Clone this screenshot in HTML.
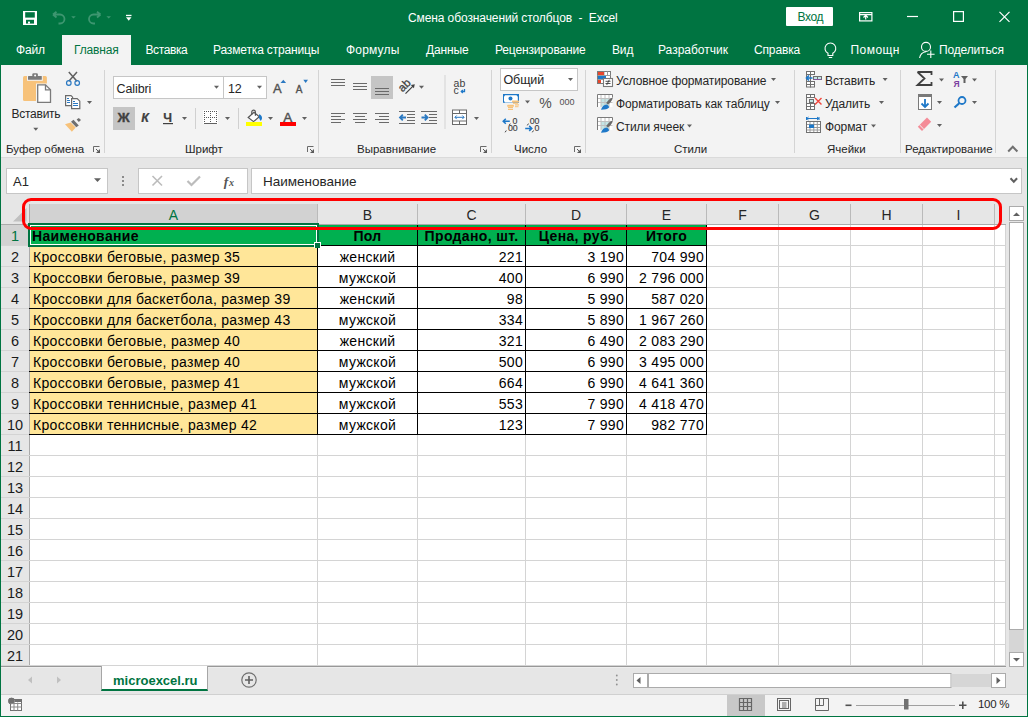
<!DOCTYPE html>
<html><head><meta charset="utf-8">
<style>
*{margin:0;padding:0;box-sizing:border-box}
html,body{width:1028px;height:717px;overflow:hidden}
body{position:relative;background:#007441;font-family:"Liberation Sans",sans-serif;color:#262626}
.a{position:absolute}
.t{position:absolute;white-space:nowrap;line-height:1}
/* title */
#title{left:0;top:0;width:1028px;height:35px;background:#007441}
.wt{color:#fff;font-size:12px;letter-spacing:-0.1px}
/* tabs */
.tab{position:absolute;top:43px;color:#fff;font-size:12px;white-space:nowrap;line-height:14px;letter-spacing:-0.15px}
#ribbon{left:1px;top:65px;width:1026px;height:93px;background:#f3f3f3;border-bottom:1px solid #dadada}
.sep{position:absolute;top:70px;width:1px;height:83px;background:#d4d4d4}
.gl{position:absolute;top:142px;font-size:11.5px;line-height:14px;white-space:nowrap;color:#262626}
.rl{position:absolute;font-size:12px;line-height:14px;white-space:nowrap;color:#262626;letter-spacing:-0.1px}
.launch{position:absolute;top:146px;width:7px;height:7px;border-left:1px solid #8a8a8a;border-top:1px solid #8a8a8a}
.launch:after{content:"";position:absolute;left:2px;top:2px;width:4px;height:4px;border-right:1px solid #555;border-bottom:1px solid #555}
#fbar{left:1px;top:158px;width:1026px;height:46px;background:#e6e6e6}
/* grid */
#gridbg{left:30px;top:225px;width:976px;height:441px;background:#fff;border-right:1px solid #ababab}
.ch{position:absolute;top:204px;height:20px;background:#e6e6e6;text-align:center;font-size:14px;line-height:22px;color:#262626}
.ch.sel{background:#d2d2d2;color:#007441}
.chl{position:absolute;top:204px;width:1px;height:20px;background:#bababa}
.rh{position:absolute;left:1px;width:28px;height:20px;background:#e6e6e6;text-align:center;font-size:14.5px;line-height:23px;color:#1a1a1a;border-bottom:1px solid #bdbdbd;height:21px}
.rh.sel{background:#d2d2d2;color:#007441}
.vl{position:absolute;top:225px;width:1px;height:441px;background:#d4d4d4}
.hl{position:absolute;left:1px;width:1005px;height:1px;background:#d4d4d4}
.fill{position:absolute}
.bk{position:absolute;background:#000}
.ct{position:absolute;height:20px;font-size:14px;line-height:22px;color:#000;white-space:nowrap;letter-spacing:0.3px}
.ct.b{font-weight:bold;letter-spacing:0.35px}
.ct.c{text-align:center}
.selb{position:absolute;border:2px solid #007441}
.selh{position:absolute;width:5px;height:5px;background:#007441;border:1px solid #fff}
</style></head><body>
<div id="title" class="a"></div>
<div class="t wt" style="left:408px;top:12px">Смена обозначений столбцов&nbsp; -&nbsp; Excel</div>
<!-- Вход -->
<div class="a" style="left:786px;top:7px;width:47px;height:19px;background:#fff;border-radius:1px"></div>
<div class="t" style="left:797.6px;top:11px;font-size:12px;color:#007441;letter-spacing:-0.45px">Вход</div>

<!-- tabs -->
<div class="a" style="left:62px;top:35px;width:69px;height:31px;background:#f3f3f3"></div>
<div class="tab" style="left:16px">Файл</div>
<div class="tab" style="left:74px;color:#007441">Главная</div>
<div class="tab" style="left:145.5px;letter-spacing:-0.4px">Вставка</div>
<div class="tab" style="left:213px">Разметка страницы</div>
<div class="tab" style="left:346px;letter-spacing:0.18px">Формулы</div>
<div class="tab" style="left:426px">Данные</div>
<div class="tab" style="left:495px">Рецензирование</div>
<div class="tab" style="left:612px">Вид</div>
<div class="tab" style="left:658px;letter-spacing:0px">Разработчик</div>
<div class="tab" style="left:754px">Справка</div>
<div class="tab" style="left:850.5px;letter-spacing:0.45px">Помощн</div>
<div class="tab" style="left:939px">Поделиться</div>

<div id="ribbon" class="a"></div>
<div class="sep" style="left:104px"></div>
<div class="sep" style="left:318px"></div>
<div class="sep" style="left:491px"></div>
<div class="sep" style="left:585px"></div>
<div class="sep" style="left:794px"></div>
<div class="sep" style="left:900px"></div>
<div class="sep" style="left:995px"></div>
<div class="gl" style="left:6px">Буфер обмена</div>
<div class="gl" style="left:185px">Шрифт</div>
<div class="gl" style="left:357px">Выравнивание</div>
<div class="gl" style="left:514px">Число</div>
<div class="gl" style="left:674px">Стили</div>
<div class="gl" style="left:827px">Ячейки</div>
<div class="gl" style="left:905px">Редактирование</div>
<svg class="a" style="left:0;top:0" width="1028" height="160"><path d="M93.5 152v-5.5h6" fill="none" stroke="#6a6a6a" stroke-width="1"/><path d="M96 153h4v-4z" fill="#5a5a5a"/><path d="M96 149l3.5 3.5" stroke="#5a5a5a" stroke-width="1"/><path d="M307.5 152v-5.5h6" fill="none" stroke="#6a6a6a" stroke-width="1"/><path d="M310 153h4v-4z" fill="#5a5a5a"/><path d="M310 149l3.5 3.5" stroke="#5a5a5a" stroke-width="1"/><path d="M480.5 152v-5.5h6" fill="none" stroke="#6a6a6a" stroke-width="1"/><path d="M483 153h4v-4z" fill="#5a5a5a"/><path d="M483 149l3.5 3.5" stroke="#5a5a5a" stroke-width="1"/><path d="M574.5 152v-5.5h6" fill="none" stroke="#6a6a6a" stroke-width="1"/><path d="M577 153h4v-4z" fill="#5a5a5a"/><path d="M577 149l3.5 3.5" stroke="#5a5a5a" stroke-width="1"/></svg>

<!-- ribbon text -->
<div class="rl" style="left:11.5px;top:107px;letter-spacing:-0.25px">Вставить</div>
<div class="a" style="left:113px;top:76px;width:111px;height:23px;background:#fff;border:1px solid #c6c6c6"></div>
<div class="a" style="left:223px;top:76px;width:44px;height:23px;background:#fff;border:1px solid #c6c6c6"></div>
<div class="rl" style="left:116.5px;top:82px;font-size:12.5px;color:#262626">Calibri</div>
<div class="rl" style="left:228px;top:82px;font-size:12.5px;color:#262626">12</div>
<div class="a" style="left:113px;top:107px;width:22px;height:23px;background:#c5c5c5"></div>
<div class="a" style="left:371px;top:76px;width:22px;height:23px;background:#c5c5c5"></div>
<div class="a" style="left:500px;top:68px;width:78px;height:23px;background:#fff;border:1px solid #c6c6c6"></div>
<div class="rl" style="left:503.5px;top:73px;font-size:12.5px;color:#262626">Общий</div>
<div class="rl" style="left:616px;top:74px">Условное форматирование</div>
<div class="rl" style="left:616px;top:97px">Форматировать как таблицу</div>
<div class="rl" style="left:616px;top:120px">Стили ячеек</div>
<div class="rl" style="left:825px;top:74px">Вставить</div>
<div class="rl" style="left:825px;top:97px">Удалить</div>
<div class="rl" style="left:825px;top:120px">Формат</div>
<svg class="a" style="left:0;top:0" width="1028" height="160" viewBox="0 0 1028 160">
<defs>
<path id="dd" d="M0 0h5l-2.5 3z" fill="#606060"/>
</defs>
<!-- title bar icons -->
<rect x="23" y="11" width="14" height="14" fill="#fff"/>
<rect x="25.2" y="12.2" width="9.6" height="5.4" fill="#007441"/>
<rect x="26" y="19.8" width="8" height="3.8" fill="#007441"/>
<rect x="28" y="21.6" width="2" height="2" fill="#fff"/>
<g fill="none" stroke="#3d9670" stroke-width="1.8">
 <path d="M53 14.5l3.5-2.8M53 14.5l3.5 3M53.5 14.5h6.5a4.5 4.5 0 0 1 0 9h-1.5"/>
 <path d="M100.5 14.5l-3.5-2.8M100.5 14.5l-3.5 3M100 14.5h-6.5a4.5 4.5 0 0 0 0 9h1.5"/>
</g>
<path d="M71.2 16.2h4.6l-2.3 2.3z M106.4 16.2h4.6l-2.3 2.3z" fill="#3d9670"/>
<rect x="126" y="14.8" width="5.5" height="1.3" fill="#fff"/><path d="M126 17.3h5.5l-2.75 3.5z" fill="#fff"/>
<!-- ribbon display options -->
<g fill="none" stroke="#fff" stroke-width="1.2">
 <rect x="859.6" y="12.6" width="12.3" height="8.3"/>
 <path d="M859.6 14.6h12.3 M865.7 19.5v-4 M863.5 17.5l2.2-2.2 2.2 2.2"/>
 <path d="M907 16.5h11"/>
 <rect x="953.6" y="11.6" width="9.8" height="9.8"/>
 <path d="M999.5 11.8l10 10 M1009.5 11.8l-10 10"/>
</g>
<!-- bulb -->
<g fill="none" stroke="#fff" stroke-width="1.1">
 <path d="M828 53.2a5.4 5.4 0 1 1 4.8 0v2.3h-4.8z M828.8 57.5h3.4"/>
 <circle cx="926" cy="46.9" r="4.5"/>
 <path d="M919.6 58c0.6-3.5 2.8-5.8 6.4-6.2"/>
 <path d="M930.8 50.5v7.6 M927 54.3h7.6"/>
</g>
<!-- Clipboard -->
<rect x="23" y="76" width="23.9" height="24.9" rx="1.5" fill="#f7c27a"/>
<rect x="27" y="76" width="15.8" height="4.8" fill="#f3f3f3"/>
<rect x="28" y="76" width="13.8" height="3.8" rx=".5" fill="#7a7a7a"/>
<rect x="32.3" y="73.3" width="5.6" height="3.5" rx="1.2" fill="#7a7a7a"/>
<circle cx="35.1" cy="75.6" r="1" fill="#fff"/>
<rect x="36" y="83.5" width="15.5" height="20" fill="#f3f3f3"/>
<path d="M37.7 84.8h7.8l5 5v12.5h-12.8z" fill="#fff" stroke="#7a7a7a" stroke-width="1.3"/>
<path d="M45.5 84.8v5h5" fill="none" stroke="#7a7a7a" stroke-width="1.3"/>
<use href="#dd" x="33.3" y="127.8"/>
<!-- scissors -->
<path d="M68.8 72l8.2 9.3 M77 72l-8.2 9.3" stroke="#606060" stroke-width="1.5"/>
<circle cx="68.8" cy="83" r="2.3" fill="none" stroke="#2b79c2" stroke-width="1.2"/>
<circle cx="77.2" cy="83" r="2.3" fill="none" stroke="#2b79c2" stroke-width="1.2"/>
<!-- copy -->
<path d="M65.6 95.6h5.4l1.6 1.6v8.4h-7z" fill="#fff" stroke="#6a6a6a" stroke-width="1.2"/>
<path d="M71.6 98.6h5.6l2.6 2.6v7.4h-8.2z" fill="#fff" stroke="#6a6a6a" stroke-width="1.2"/>
<path d="M67 98.5h2 M67 100.5h3 M67 102.5h3 M73 101.5h2 M73 103.5h5 M73 105.5h5" stroke="#2b79c2" stroke-width="1"/>
<use href="#dd" x="87" y="101"/>
<!-- brush -->
<path d="M65 124.2l5.7-1.6 5 5-3.8 4.1z" fill="#f7c27a"/>
<path d="M71 121.7l2.5-1.9 5.3 5.6-2.5 1.9z" fill="#707070"/>
<path d="M76.6 119.5l2.2-1.6 2.2 2.2-2.2 1.9z" fill="#707070"/>
<!-- font dropdown arrows -->
<use href="#dd" x="214" y="85.8"/>
<use href="#dd" x="257" y="85.8"/>
<!-- grow/shrink A -->
<text x="273" y="92.7" font-family="Liberation Sans" font-size="13" fill="#505050" stroke="#505050" stroke-width="0.35">A</text>
<path d="M280.5 83h5.6l-2.8-3.3z" fill="#2b79c2"/>
<text x="295.8" y="92.7" font-family="Liberation Sans" font-size="10" fill="#505050" stroke="#505050" stroke-width="0.35">A</text>
<path d="M303.3 79.7h4.7l-2.35 3.3z" fill="#2b79c2"/>
<!-- B I U -->
<text x="117.6" y="121.9" font-family="Liberation Sans" font-weight="bold" font-size="12.5" fill="#404040" stroke="#404040" stroke-width="0.3" transform="translate(117.6 0) scale(1.08 1) translate(-117.6 0)">Ж</text>
<text x="141.3" y="121.9" font-family="Liberation Sans" font-weight="bold" font-style="italic" font-size="12.5" fill="#404040" stroke="#404040" stroke-width="0.2">К</text>
<text x="163.3" y="121.9" font-family="Liberation Sans" font-weight="bold" font-size="12.5" fill="#404040" stroke="#404040" stroke-width="0.2">Ч</text>
<rect x="163" y="123" width="10" height="1.2" fill="#404040"/>
<use href="#dd" x="182" y="117"/>
<rect x="195" y="108" width="1" height="21" fill="#d0d0d0"/>
<!-- borders -->
<rect x="203" y="110" width="15" height="14" fill="#fff"/>
<g fill="#555"><rect x="204" y="111" width="1" height="1"/><rect x="206" y="111" width="1" height="1"/><rect x="208" y="111" width="1" height="1"/><rect x="210" y="111" width="1" height="1"/><rect x="212" y="111" width="1" height="1"/><rect x="214" y="111" width="1" height="1"/><rect x="216" y="111" width="1" height="1"/><rect x="204" y="113" width="1" height="1"/><rect x="210" y="113" width="1" height="1"/><rect x="216" y="113" width="1" height="1"/><rect x="204" y="115" width="1" height="1"/><rect x="210" y="115" width="1" height="1"/><rect x="216" y="115" width="1" height="1"/><rect x="204" y="117" width="1" height="1"/><rect x="206" y="117" width="1" height="1"/><rect x="208" y="117" width="1" height="1"/><rect x="210" y="117" width="1" height="1"/><rect x="212" y="117" width="1" height="1"/><rect x="214" y="117" width="1" height="1"/><rect x="216" y="117" width="1" height="1"/><rect x="204" y="119" width="1" height="1"/><rect x="210" y="119" width="1" height="1"/><rect x="216" y="119" width="1" height="1"/><rect x="204" y="121" width="1" height="1"/><rect x="210" y="121" width="1" height="1"/><rect x="216" y="121" width="1" height="1"/></g>
<rect x="204" y="123" width="13" height="1" fill="#606060"/>
<use href="#dd" x="225" y="117"/>
<rect x="238" y="108" width="1" height="21" fill="#d0d0d0"/>
<!-- fill bucket -->
<path d="M248.2 117.5L254 112.2 259.3 116.8 253.5 121.6z" fill="#fff" stroke="#555" stroke-width="1.2"/>
<path d="M251.8 114.5v-2.6a1.8 1.8 0 0 1 3.6 0v3.8" fill="none" stroke="#555" stroke-width="1.2"/>
<path d="M259 114.3c2 .3 3 2.3 3 3.8 0 1.5-.8 2.3-1.3 3-.6-1.5-1.7-2.2-1.7-3.8z" fill="#1e78c8"/>
<rect x="246" y="122" width="16" height="4" fill="#ffff00"/>
<use href="#dd" x="268" y="117"/>
<!-- font color -->
<text x="283.3" y="121.8" font-family="Liberation Sans" font-size="13.5" fill="#505050" stroke="#505050" stroke-width="0.4">A</text>
<rect x="280" y="122" width="16" height="4" fill="#ff0000"/>
<use href="#dd" x="302" y="117"/>

<!-- alignment -->
<g stroke="#6a6a6a" stroke-width="1.1">
<path d="M331 79.5h14 M331 82.5h14 M331 85.5h14"/>
<path d="M353 83.5h14 M353 86.5h14 M353 89.5h14"/>
<path d="M375 88.5h14 M375 91.5h14 M375 94.5h14"/>
<path d="M331 113.5h14 M331 116.5h10 M331 119.5h14 M331 122.5h10"/>
<path d="M353 113.5h14 M355 116.5h10 M353 119.5h14 M355 122.5h10"/>
<path d="M375 113.5h14 M379 116.5h10 M375 119.5h14 M379 122.5h10"/>
<path d="M399 111.5h16 M407 114.5h8 M407 117.5h8 M407 120.5h8 M399 123.5h16"/>
<path d="M421 111.5h16 M429 114.5h8 M429 117.5h8 M429 120.5h8 M421 123.5h16"/>
</g>
<path d="M400 117.5h6 M402.8 114.7l-2.8 2.8 2.8 2.8" stroke="#2b79c2" stroke-width="1.8" fill="none"/>
<path d="M421.5 117.5h6 M424.8 114.7l2.8 2.8-2.8 2.8" stroke="#2b79c2" stroke-width="1.8" fill="none"/>
<text x="0" y="0" font-family="Liberation Sans" font-size="11.5" fill="#404040" stroke="#404040" stroke-width="0.3" transform="translate(402.6 92.6) rotate(-45)">ab</text>
<path d="M405.5 93.6l7.5-7.5" stroke="#404040" stroke-width="1.3" fill="none"/><path d="M414.8 84.2l-4 .9 3.1 3.1z" fill="#404040"/>
<use href="#dd" x="419" y="85.8"/>
<rect x="444.5" y="75" width="1" height="54" fill="#d4d4d4"/>
<!-- wrap -->
<text x="453.6" y="86.7" font-family="Liberation Sans" font-size="10.5" fill="#404040">ab</text>
<text x="453.6" y="93.8" font-family="Liberation Sans" font-size="10.5" fill="#404040">c</text>
<path d="M464.5 89v2.5h-3 M462.8 90l-1.5 1.5 1.5 1.5" stroke="#1e78c8" stroke-width="1.3" fill="none"/>
<!-- merge -->
<rect x="452.5" y="110" width="14" height="14.5" fill="#fff" stroke="#6a6a6a" stroke-width="1"/>
<path d="M452.5 113.5h14 M452.5 121h14 M459.5 110v3.5 M459.5 121v3.5" stroke="#6a6a6a" stroke-width="1"/>
<path d="M455 117.3h9 M456.7 115.5l-1.8 1.8 1.8 1.8 M462.3 115.5l1.8 1.8-1.8 1.8" stroke="#2b79c2" stroke-width="1" fill="none"/>
<use href="#dd" x="474" y="117"/>

<!-- number -->
<use href="#dd" x="568" y="78"/>
<rect x="503" y="94" width="16" height="8.8" fill="#1e78c8"/>
<path d="M505 95.3h11.5l1.3 1.5v4.4h-5v1.2h-7.8l-1-1.4v-4.2z" fill="#fff"/>
<circle cx="510.5" cy="98.4" r="2" fill="#1e78c8"/>
<rect x="512" y="100.5" width="7" height="2" rx=".6" fill="#f7c27a"/>
<rect x="513" y="102.6" width="5" height="1.2" fill="#f7c27a"/>
<rect x="515" y="104.3" width="4" height="1.2" fill="#f7c27a"/>
<rect x="515" y="106.2" width="3.5" height="1" fill="#f7c27a"/>
<rect x="507.2" y="104.8" width="6.7" height="2" rx=".6" fill="#f7c27a"/>
<rect x="508" y="106.9" width="5" height="1.2" fill="#f7c27a"/>
<rect x="508" y="108.8" width="5" height="1.2" fill="#f7c27a"/>
<use href="#dd" x="525" y="100.5"/>
<text x="539.3" y="107.7" font-family="Liberation Sans" font-size="14" fill="#505050">%</text>
<text x="559.5" y="104.7" font-family="Liberation Sans" font-size="9" fill="#505050">000</text>
<g font-family="Liberation Sans" font-size="8.8" fill="#404040" stroke="#404040" stroke-width="0.15">
<text x="512.6" y="123.9">0</text>
<text x="507.9" y="130.9">00</text>
<text x="529.7" y="123.9">00</text>
<text x="534.6" y="130.9">0</text>
</g>
<path d="M506.3 130.5l-1.2 1.8 M510.3 123.6l-1.2 1.8 M528.5 123.6l-1.2 1.8 M533.5 130.5l-1.2 1.8" stroke="#404040" stroke-width="1"/>
<path d="M503 121.3h6.8 M505.8 118.8l-2.6 2.5 2.6 2.5" stroke="#1e78c8" stroke-width="1.5" fill="none"/>
<path d="M525.2 128.4h6.6 M529.2 125.9l2.6 2.5-2.6 2.5" stroke="#1e78c8" stroke-width="1.5" fill="none"/>

<!-- styles icons -->
<g>
<rect x="597.5" y="71.5" width="13" height="12" fill="#fff" stroke="#7a7a7a" stroke-width="1"/>
<path d="M597.5 75.5h13 M597.5 79.5h6 M604 71.5v4 M607.5 71.5v4" stroke="#9a9a9a" stroke-width="1"/>
<rect x="598" y="72" width="6" height="3" fill="#e8462b"/>
<rect x="598" y="76" width="8" height="3" fill="#1e78c8"/>
<rect x="598" y="80" width="3" height="3" fill="#e8462b"/>
<rect x="603.5" y="78.5" width="9" height="8" fill="#fff" stroke="#7a7a7a" stroke-width="1.1"/>
<path d="M605.5 81.3h5 M605.5 83.5h5 M609.3 79.8l-2.6 5.2" stroke="#404040" stroke-width=".9"/>
</g>
<g id="ftab">
<rect x="597.5" y="94.5" width="15" height="12.5" fill="#fff"/>
<rect x="601" y="98.5" width="8" height="8" fill="#c3e4e4"/>
<path d="M597.5 98.5h15 M597.5 102.5h15 M601 94.5v12.5 M605 94.5v12.5 M609 94.5v12.5" stroke="#c0c0c0" stroke-width="1"/>
<path d="M597.5 107v-12.5h15" fill="none" stroke="#7a7a7a" stroke-width="1"/>
<path d="M612.5 94.5v3" fill="none" stroke="#7a7a7a" stroke-width="1"/>
<path d="M612.8 97.5c-.5 3-2.5 5.5-5 7l-1.6-1.6c1.6-2.4 4-4.6 6.6-5.4z" fill="#6a6a6a"/>
<path d="M601 109.7c.8-2.8 2.8-5 6-5.2 1 .8 1.8 1.7 2.3 2.7-1.5 1.8-4.5 2.5-8.3 2.5z" fill="#1e78c8"/>
</g>
<use href="#ftab" y="23"/>
<use href="#dd" x="771" y="78"/>
<use href="#dd" x="775" y="101"/>
<use href="#dd" x="687" y="124.5"/>

<!-- cells icons -->
<g stroke="#707070" stroke-width="1" fill="#fff">
<rect x="806.5" y="71.5" width="4" height="3"/><rect x="810.5" y="71.5" width="4" height="3"/>
<rect x="806.5" y="81.5" width="4" height="3"/><rect x="810.5" y="81.5" width="4" height="3"/>
<rect x="806.5" y="84.5" width="4" height="2.5"/><rect x="810.5" y="84.5" width="4" height="2.5"/>
<rect x="806.5" y="74.5" width="4" height="7" fill="none"/>
<rect x="813.5" y="76.5" width="4" height="3" fill="#c3e4e4"/><rect x="817.5" y="76.5" width="4" height="3" fill="#c3e4e4"/>
</g>
<path d="M813.5 79.5h8" stroke="#8a4fa8" stroke-width=".8"/>
<path d="M806.5 78h6 M809 75.5l-2.5 2.5 2.5 2.5" stroke="#1e78c8" stroke-width="1.6" fill="none"/>
<use href="#dd" x="882.6" y="78"/>
<g stroke="#707070" stroke-width="1" fill="#fff">
<rect x="806.5" y="94.5" width="4" height="3"/><rect x="810.5" y="94.5" width="4" height="3"/>
<rect x="806.5" y="103.5" width="4" height="3"/><rect x="810.5" y="103.5" width="4" height="3"/>
<rect x="806.5" y="106.5" width="4" height="3"/><rect x="810.5" y="106.5" width="4" height="3"/>
<path d="M806.5 97.5v6" fill="none"/>
<rect x="809.5" y="99.5" width="4" height="3" fill="#c3e4e4"/>
</g>
<path d="M815 98l6.5 6.5 M821.5 98l-6.5 6.5" stroke="#f0463c" stroke-width="1.4"/>
<use href="#dd" x="879" y="101"/>
<g>
<rect x="806.5" y="121.5" width="14" height="11" fill="#fff" stroke="#707070" stroke-width="1"/>
<path d="M806.5 124.5h14 M806.5 127.5h14 M806.5 130h14 M810 121.5v11 M813.8 121.5v11 M817.3 121.5v11" stroke="#9a9a9a" stroke-width="1"/>
<rect x="806.5" y="121.5" width="14" height="11" fill="none" stroke="#707070" stroke-width="1"/>
<rect x="809" y="124.5" width="5" height="3.5" fill="#1e78c8"/>
<path d="M806.5 118.5h12.5 M806.5 117v3 M819 117v3 M808.5 117l-1.8 1.5 1.8 1.5 M817 117l1.8 1.5-1.8 1.5" stroke="#1e78c8" stroke-width="1" fill="none"/>
</g>
<use href="#dd" x="871" y="124.5"/>

<!-- editing -->
<path d="M917.5 72h14v3 M931.5 85h-14l7-6.5-7-6.5 M917.5 85h14v-3" fill="none" stroke="#404040" stroke-width="1.8"/>
<use href="#dd" x="939" y="78.6"/>
<text x="953" y="77.8" font-family="Liberation Sans" font-size="9" font-weight="bold" fill="#1e78c8">A</text>
<text x="953.5" y="87" font-family="Liberation Sans" font-size="8.5" font-weight="bold" fill="#7b3fa0">Я</text>
<path d="M961 76h7l-2.5 3v4h-2v-4z" fill="#606060"/>
<use href="#dd" x="972" y="78.6"/>
<rect x="918.5" y="94.5" width="13" height="15" fill="#fff" stroke="#7a7a7a" stroke-width="1"/>
<rect x="918.5" y="94.5" width="13" height="2.5" fill="#7a7a7a"/>
<path d="M925 99v8 M921.5 103.5l3.5 3.5 3.5-3.5" stroke="#1e78c8" stroke-width="1.8" fill="none"/>
<use href="#dd" x="937" y="101"/>
<circle cx="962" cy="100.5" r="3.5" fill="none" stroke="#1e78c8" stroke-width="1.8"/>
<path d="M959.5 103l-5 4.5" stroke="#1e78c8" stroke-width="2.2"/>
<use href="#dd" x="972" y="101"/>
<path d="M931.2 121.8L927 117.6 917.8 126.8 922 131z" fill="#f48b97"/>
<path d="M919.4 124.8l4.4 4.4" stroke="#f3f3f3" stroke-width="1"/>
<use href="#dd" x="937" y="124"/>
<path d="M1008.2 151.5l4.6-4.8 4.6 4.8" fill="none" stroke="#707070" stroke-width="2"/>
</svg>


<div id="fbar" class="a"></div>
<div class="a" style="left:6px;top:168px;width:102px;height:26px;background:#fff;border:1px solid #c6c6c6"></div>
<div class="t" style="left:13px;top:175px;font-size:13px;color:#262626">A1</div>
<div class="a" style="left:138px;top:168px;width:110px;height:26px;background:#fff;border:1px solid #c6c6c6"></div>
<div class="a" style="left:251px;top:168px;width:771px;height:26px;background:#fff;border:1px solid #c6c6c6"></div>
<div class="t" style="left:263px;top:175px;font-size:13.5px;color:#262626">Наименование</div>

<div class="a" style="left:1px;top:204px;width:1026px;height:462px;background:#e6e6e6"></div>
<div id="gridbg" class="a"></div>
<div class="a" style="left:1px;top:204px;width:28px;height:20px;background:#e6e6e6"></div>
<div class="a" style="left:994px;top:204px;width:11px;height:20px;background:#e6e6e6"></div>
<div class="ch sel" style="left:30px;width:287px">A</div>
<div class="chl" style="left:317px"></div>
<div class="ch" style="left:318px;width:99px">B</div>
<div class="chl" style="left:417px"></div>
<div class="ch" style="left:418px;width:107px">C</div>
<div class="chl" style="left:525px"></div>
<div class="ch" style="left:526px;width:100px">D</div>
<div class="chl" style="left:626px"></div>
<div class="ch" style="left:627px;width:79px">E</div>
<div class="chl" style="left:706px"></div>
<div class="ch" style="left:707px;width:71px">F</div>
<div class="chl" style="left:778px"></div>
<div class="ch" style="left:779px;width:71px">G</div>
<div class="chl" style="left:850px"></div>
<div class="ch" style="left:851px;width:71px">H</div>
<div class="chl" style="left:922px"></div>
<div class="ch" style="left:923px;width:71px">I</div>
<div class="chl" style="left:994px"></div>
<div class="rh sel" style="top:225px">1</div>
<div class="rh" style="top:246px">2</div>
<div class="rh" style="top:267px">3</div>
<div class="rh" style="top:288px">4</div>
<div class="rh" style="top:309px">5</div>
<div class="rh" style="top:330px">6</div>
<div class="rh" style="top:351px">7</div>
<div class="rh" style="top:372px">8</div>
<div class="rh" style="top:393px">9</div>
<div class="rh" style="top:414px">10</div>
<div class="rh" style="top:435px">11</div>
<div class="rh" style="top:456px">12</div>
<div class="rh" style="top:477px">13</div>
<div class="rh" style="top:498px">14</div>
<div class="rh" style="top:519px">15</div>
<div class="rh" style="top:540px">16</div>
<div class="rh" style="top:561px">17</div>
<div class="rh" style="top:582px">18</div>
<div class="rh" style="top:603px">19</div>
<div class="rh" style="top:624px">20</div>
<div class="rh" style="top:645px">21</div>
<div class="a" style="left:29px;top:204px;width:1px;height:462px;background:#ababab"></div>
<div class="a" style="left:1px;top:224px;width:1005px;height:1px;background:#ababab"></div>
<div class="fill" style="left:30px;top:225px;width:676px;height:20px;background:#00b050"></div>
<div class="fill" style="left:30px;top:246px;width:287px;height:188px;background:#ffe699"></div>
<div class="vl" style="left:317px"></div>
<div class="vl" style="left:417px"></div>
<div class="vl" style="left:525px"></div>
<div class="vl" style="left:626px"></div>
<div class="vl" style="left:706px"></div>
<div class="vl" style="left:778px"></div>
<div class="vl" style="left:850px"></div>
<div class="vl" style="left:922px"></div>
<div class="vl" style="left:994px"></div>
<div class="vl" style="left:1005px"></div>
<div class="hl" style="top:245px"></div>
<div class="hl" style="top:266px"></div>
<div class="hl" style="top:287px"></div>
<div class="hl" style="top:308px"></div>
<div class="hl" style="top:329px"></div>
<div class="hl" style="top:350px"></div>
<div class="hl" style="top:371px"></div>
<div class="hl" style="top:392px"></div>
<div class="hl" style="top:413px"></div>
<div class="hl" style="top:434px"></div>
<div class="hl" style="top:455px"></div>
<div class="hl" style="top:476px"></div>
<div class="hl" style="top:497px"></div>
<div class="hl" style="top:518px"></div>
<div class="hl" style="top:539px"></div>
<div class="hl" style="top:560px"></div>
<div class="hl" style="top:581px"></div>
<div class="hl" style="top:602px"></div>
<div class="hl" style="top:623px"></div>
<div class="hl" style="top:644px"></div>
<div class="hl" style="top:665px"></div>
<div class="bk" style="left:317px;top:225px;width:1px;height:210px"></div>
<div class="bk" style="left:417px;top:225px;width:1px;height:210px"></div>
<div class="bk" style="left:525px;top:225px;width:1px;height:210px"></div>
<div class="bk" style="left:626px;top:225px;width:1px;height:210px"></div>
<div class="bk" style="left:706px;top:225px;width:1px;height:210px"></div>
<div class="bk" style="left:29px;top:245px;width:678px;height:1px"></div>
<div class="bk" style="left:29px;top:266px;width:678px;height:1px"></div>
<div class="bk" style="left:29px;top:287px;width:678px;height:1px"></div>
<div class="bk" style="left:29px;top:308px;width:678px;height:1px"></div>
<div class="bk" style="left:29px;top:329px;width:678px;height:1px"></div>
<div class="bk" style="left:29px;top:350px;width:678px;height:1px"></div>
<div class="bk" style="left:29px;top:371px;width:678px;height:1px"></div>
<div class="bk" style="left:29px;top:392px;width:678px;height:1px"></div>
<div class="bk" style="left:29px;top:413px;width:678px;height:1px"></div>
<div class="bk" style="left:29px;top:434px;width:678px;height:1px"></div>
<div class="ct b" style="left:32px;top:225px">Наименование</div>
<div class="ct b c" style="left:318px;width:99px;top:225px">Пол</div>
<div class="ct b c" style="left:418px;width:107px;top:225px">Продано, шт.</div>
<div class="ct b c" style="left:526px;width:100px;top:225px">Цена, руб.</div>
<div class="ct b c" style="left:627px;width:79px;top:225px">Итого</div>
<div class="ct" style="left:33px;top:246px">Кроссовки беговые, размер 35</div>
<div class="ct c" style="left:318px;width:99px;top:246px">женский</div>
<div class="ct r" style="right:505px;top:246px">221</div>
<div class="ct r" style="right:404px;top:246px">3 190</div>
<div class="ct r" style="right:324px;top:246px">704 990</div>
<div class="ct" style="left:33px;top:267px">Кроссовки беговые, размер 39</div>
<div class="ct c" style="left:318px;width:99px;top:267px">мужской</div>
<div class="ct r" style="right:505px;top:267px">400</div>
<div class="ct r" style="right:404px;top:267px">6 990</div>
<div class="ct r" style="right:324px;top:267px">2 796 000</div>
<div class="ct" style="left:33px;top:288px">Кроссовки для баскетбола, размер 39</div>
<div class="ct c" style="left:318px;width:99px;top:288px">женский</div>
<div class="ct r" style="right:505px;top:288px">98</div>
<div class="ct r" style="right:404px;top:288px">5 990</div>
<div class="ct r" style="right:324px;top:288px">587 020</div>
<div class="ct" style="left:33px;top:309px">Кроссовки для баскетбола, размер 43</div>
<div class="ct c" style="left:318px;width:99px;top:309px">мужской</div>
<div class="ct r" style="right:505px;top:309px">334</div>
<div class="ct r" style="right:404px;top:309px">5 890</div>
<div class="ct r" style="right:324px;top:309px">1 967 260</div>
<div class="ct" style="left:33px;top:330px">Кроссовки беговые, размер 40</div>
<div class="ct c" style="left:318px;width:99px;top:330px">женский</div>
<div class="ct r" style="right:505px;top:330px">321</div>
<div class="ct r" style="right:404px;top:330px">6 490</div>
<div class="ct r" style="right:324px;top:330px">2 083 290</div>
<div class="ct" style="left:33px;top:351px">Кроссовки беговые, размер 40</div>
<div class="ct c" style="left:318px;width:99px;top:351px">мужской</div>
<div class="ct r" style="right:505px;top:351px">500</div>
<div class="ct r" style="right:404px;top:351px">6 990</div>
<div class="ct r" style="right:324px;top:351px">3 495 000</div>
<div class="ct" style="left:33px;top:372px">Кроссовки беговые, размер 41</div>
<div class="ct c" style="left:318px;width:99px;top:372px">мужской</div>
<div class="ct r" style="right:505px;top:372px">664</div>
<div class="ct r" style="right:404px;top:372px">6 990</div>
<div class="ct r" style="right:324px;top:372px">4 641 360</div>
<div class="ct" style="left:33px;top:393px">Кроссовки теннисные, размер 41</div>
<div class="ct c" style="left:318px;width:99px;top:393px">мужской</div>
<div class="ct r" style="right:505px;top:393px">553</div>
<div class="ct r" style="right:404px;top:393px">7 990</div>
<div class="ct r" style="right:324px;top:393px">4 418 470</div>
<div class="ct" style="left:33px;top:414px">Кроссовки теннисные, размер 42</div>
<div class="ct c" style="left:318px;width:99px;top:414px">мужской</div>
<div class="ct r" style="right:505px;top:414px">123</div>
<div class="ct r" style="right:404px;top:414px">7 990</div>
<div class="ct r" style="right:324px;top:414px">982 770</div>
<div class="a" style="left:28px;top:223px;width:291px;height:24px;border:2px solid #007441"></div>
<div class="a" style="left:30px;top:225px;width:287px;height:20px;border:1px solid #fff"></div>
<div class="a" style="left:314px;top:242px;width:7px;height:6px;background:#fff"></div>
<div class="a" style="left:315px;top:243px;width:5px;height:5px;background:#007441"></div>



<!-- sheet bar -->
<div class="a" style="left:1px;top:666px;width:1026px;height:28px;background:#e6e6e6"></div><div class="a" style="left:1px;top:666px;width:1005px;height:1px;background:#989898"></div><div class="a" style="left:1px;top:667px;width:1005px;height:1px;background:#eeeeee"></div>
<div class="a" style="left:101px;top:666px;width:107px;height:25px;background:#fff;border:1px solid #a6a6a6;border-top:none;border-bottom:2px solid #007441"></div>
<div class="t" style="left:113px;top:674px;font-size:13px;font-weight:bold;color:#007441">microexcel.ru</div>

<!-- status bar -->
<div class="a" style="left:1px;top:694px;width:1026px;height:22px;background:#f3f3f3;border-top:1px solid #d0d0d0"></div>
<div class="a" style="left:727px;top:695px;width:38px;height:21px;background:#c8c8c8"></div>
<svg class="a" style="left:0;top:0" width="1028" height="717" viewBox="0 0 1028 717">
<!-- formula bar icons -->
<path d="M94 178.3h7l-3.5 3.7z" fill="#606060"/>
<rect x="122" y="176" width="2" height="2" fill="#8a8a8a"/><rect x="122" y="180" width="2" height="2" fill="#8a8a8a"/><rect x="122" y="184" width="2" height="2" fill="#8a8a8a"/>
<path d="M152.5 176l9.5 9.5 M162 176l-9.5 9.5" stroke="#bcbcbc" stroke-width="1.6"/>
<path d="M187.5 181l4 4 8.5-8.5" stroke="#bcbcbc" stroke-width="2.2" fill="none"/>
<text x="223.8" y="186" font-family="Liberation Serif" font-style="italic" font-weight="bold" font-size="13.5" fill="#555">f</text>
<text x="229" y="185.5" font-family="Liberation Serif" font-style="italic" font-weight="bold" font-size="10" fill="#555">x</text>
<path d="M1010.5 178.3l3.3 3.5 3.3-3.5" stroke="#606060" stroke-width="2" fill="none"/>
<!-- corner triangle -->
<path d="M13 221.5h13.5v-13.5z" fill="#c0c0c0"/>
<!-- row header / col header borders -->
<!-- vertical scrollbar -->
<rect x="1009.5" y="206.5" width="14" height="14" fill="#fff" stroke="#ababab"/>
<path d="M1013 216h7l-3.5-3.5z" fill="#606060"/>
<rect x="1009.5" y="222.5" width="14" height="407" fill="#fff" stroke="#ababab"/>
<rect x="1009" y="630" width="15" height="22" fill="#d6d6d6"/>
<rect x="1009.5" y="652.5" width="14" height="14" fill="#fff" stroke="#ababab"/>
<path d="M1013 658h7l-3.5 3.5z" fill="#606060"/>
<!-- sheet nav -->
<path d="M28 680l4-3.5v7z" fill="#c0c0c0"/>
<path d="M57 676.5v7l4-3.5z" fill="#c0c0c0"/>
<circle cx="249" cy="680" r="7.2" fill="none" stroke="#707070" stroke-width="1.2"/>
<path d="M245 680h8 M249 676v8" stroke="#606060" stroke-width="1.6"/>
<!-- horizontal scrollbar -->
<circle cx="616.8" cy="675.5" r=".9" fill="#909090"/><circle cx="616.8" cy="680" r=".9" fill="#909090"/><circle cx="616.8" cy="684.5" r=".9" fill="#909090"/>
<rect x="633.5" y="673.5" width="14" height="14" fill="#fff" stroke="#ababab"/>
<path d="M636.5 680.5l4-3.5v7z" fill="#606060"/>
<rect x="648.5" y="673.5" width="302.5" height="14" fill="#fff" stroke="#ababab"/>
<rect x="951.5" y="674" width="39.5" height="13" fill="#d6d6d6"/>
<rect x="991.5" y="673.5" width="14" height="14" fill="#fff" stroke="#ababab"/>
<path d="M996.5 677v7l4-3.5z" fill="#606060"/>
<!-- status icons -->
<circle cx="11.5" cy="701" r="3.2" fill="#707070"/>
<rect x="10.5" y="699.5" width="11" height="11" fill="#fff" stroke="#707070"/>
<rect x="14.5" y="699" width="7.5" height="3" fill="#707070"/>
<circle cx="11.5" cy="701" r="3.2" fill="#707070"/>
<path d="M10.5 703.5h11 M10.5 707h11 M14 702.5v8 M17.7 702.5v8" stroke="#8a8a8a" stroke-width="1"/>
<g fill="none" stroke="#666" stroke-width="1.2">
<path d="M739.5 698.5h12v12h-12z M739.5 702.5h12 M739.5 706.5h12 M743.5 698.5v12 M747.5 698.5v12"/>
</g>
<g fill="none" stroke="#666" stroke-width="1">
<rect x="777.5" y="698.5" width="13" height="12"/>
<rect x="779.5" y="700.5" width="9" height="8"/>
<path d="M782 703h4.5 M782 705h4.5 M782 707h4.5"/>
<path d="M815.5 698.5h13v12h-13z M815.5 705.5h8v-7 M819.5 698.5v7"/>
</g>
<rect x="845.5" y="704.5" width="6" height="1.6" fill="#505050"/>
<rect x="856" y="705" width="99" height="1" fill="#a0a0a0"/>
<rect x="904" y="699" width="4.5" height="10.5" fill="#707070"/>
<path d="M959 705.3h7.5 M962.8 701.5v7.5" stroke="#505050" stroke-width="1.6"/>
</svg>

<div class="t" style="left:978px;top:699px;font-size:11.5px;color:#262626;letter-spacing:-0.3px">100 %</div>
<!-- red highlight -->
<div class="a" style="left:22px;top:198px;width:980px;height:32px;border:3px solid #ff0000;border-radius:9px"></div>
</body></html>
